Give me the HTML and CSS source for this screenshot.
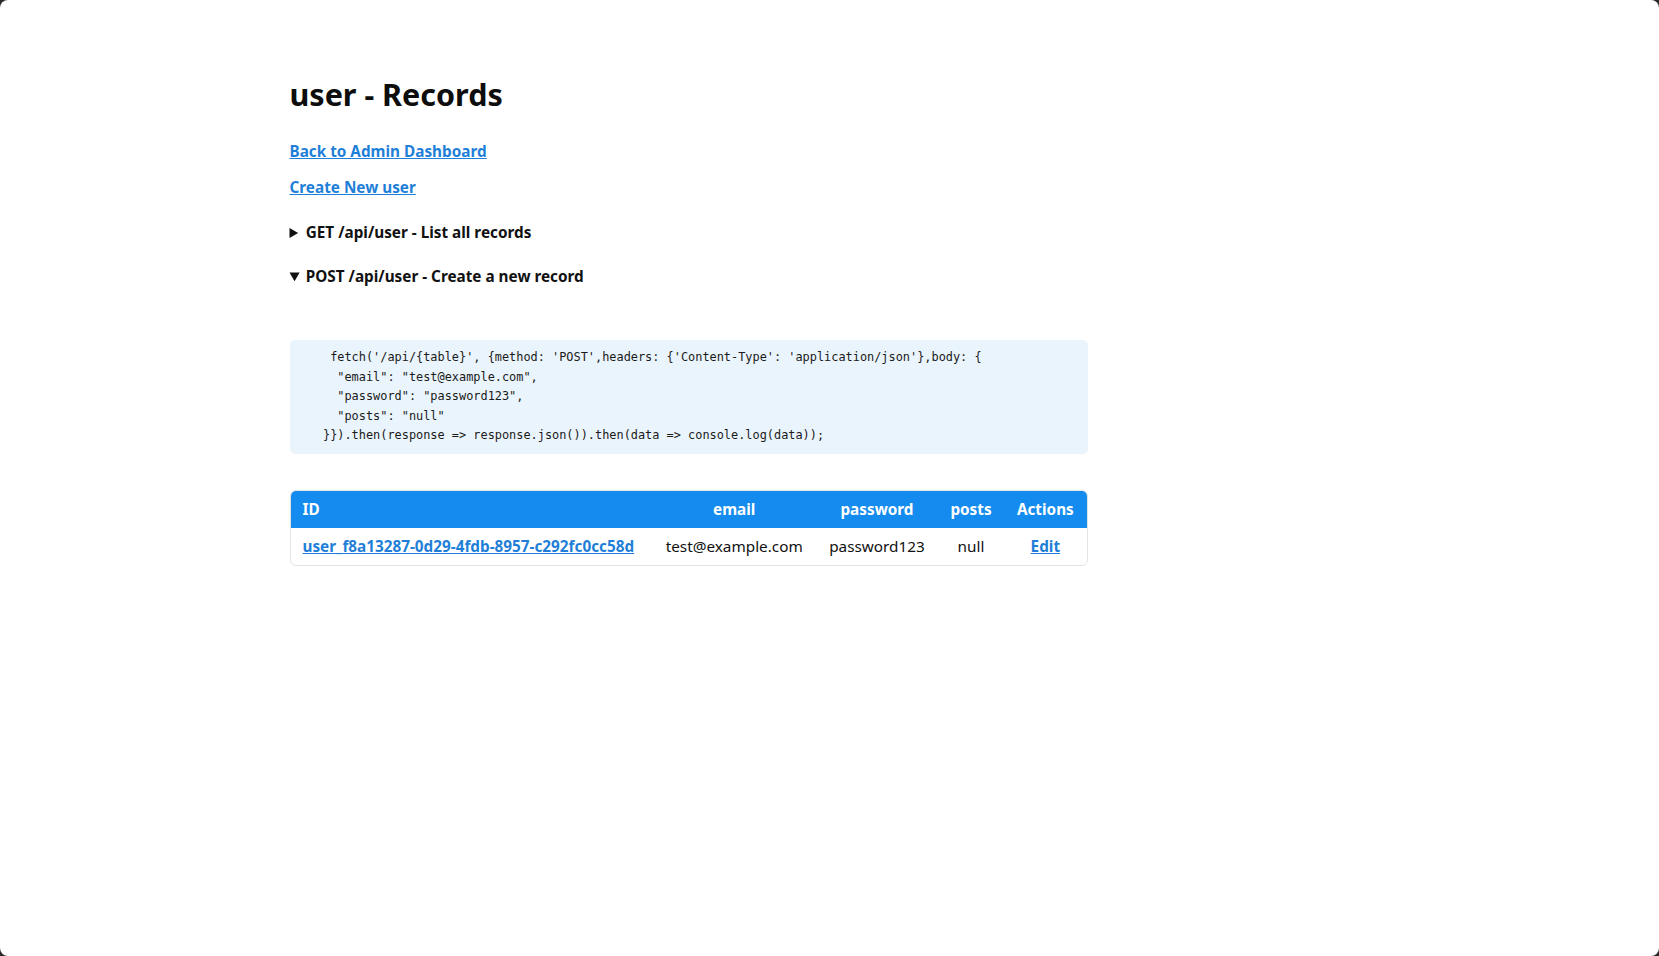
FILE: index.html
```html
<!DOCTYPE html>
<html lang="en">
<head>
<meta charset="utf-8">
<title>user - Records</title>
<link rel="stylesheet" href="styles.css">
</head>
<body>
<div class="page">
  <h1 class="title">user - Records</h1>
  <p class="nav"><a href="#">Back to Admin Dashboard</a></p>
  <p class="nav nav-second"><a href="#">Create New user</a></p>
  <details class="api api-get">
    <summary>GET /api/user - List all records</summary>
    <pre class="code">fetch('/api/user').then(response =&gt; response.json()).then(data =&gt; console.log(data));</pre>
  </details>
  <details class="api api-post" open>
    <summary>POST /api/user - Create a new record</summary>
    <pre class="code">    fetch('/api/{table}', {method: 'POST',headers: {'Content-Type': 'application/json'},body: {
     "email": "test@example.com",
     "password": "password123",
     "posts": "null"
   }}).then(response =&gt; response.json()).then(data =&gt; console.log(data));</pre>
  </details>
  <table class="records">
    <thead>
      <tr>
        <th class="col-id">ID</th>
        <th>email</th>
        <th>password</th>
        <th>posts</th>
        <th>Actions</th>
      </tr>
    </thead>
    <tbody>
      <tr>
        <td class="col-id"><a href="#">user_f8a13287-0d29-4fdb-8957-c292fc0cc58d</a></td>
        <td>test@example.com</td>
        <td>password123</td>
        <td>null</td>
        <td><a href="#">Edit</a></td>
      </tr>
    </tbody>
  </table>
</div>
</body>
</html>
```

FILE: styles.css
```css
html {
  background: #2a2a2a;
}

body {
  margin: 0;
  min-height: 100vh;
  background: #ffffff;
  border-radius: 8px;
  font-family: "Noto Sans", "Open Sans", sans-serif;
  color: #111111;
}

.page {
  width: 1080px;
  margin: 0 auto;
  padding-top: 74px;
}

.title {
  margin: 0;
  font-size: 30.5px;
  line-height: 40px;
  font-weight: 700;
  color: #0d0d0d;
}

.nav {
  margin: 27px 0 0;
  font-size: 15.3px;
  line-height: 20px;
  font-weight: 700;
}

.nav-second {
  margin-top: 16px;
}

a {
  color: #1f7fd8;
  text-decoration: underline;
  font-weight: 700;
}

.api {
  margin-top: 25px;
}

.api-post {
  margin-top: 24px;
}

.api summary {
  font-size: 15.3px;
  line-height: 20px;
  font-weight: 700;
  cursor: pointer;
}

.code {
  box-sizing: border-box;
  width: 798px;
  margin: 54px 0 0;
  padding: 8px 12px;
  background: #eaf4fc;
  border-radius: 5px;
  font-family: "DejaVu Sans Mono", "Liberation Mono", monospace;
  font-size: 11.9px;
  line-height: 19.5px;
  color: #1a1a1a;
  white-space: pre;
}

.records {
  width: 798px;
  margin-top: 36px;
  border-collapse: separate;
  border-spacing: 0;
  border: 1px solid #e3e3e3;
  border-radius: 6px;
  overflow: hidden;
  font-size: 15.3px;
}

.records th,
.records td {
  padding: 8.5px 12px;
  line-height: 20px;
  text-align: center;
  white-space: nowrap;
}

.records th {
  background: #148bee;
  color: #ffffff;
  font-weight: 700;
}

.records td {
  color: #111111;
}

.records .col-id {
  text-align: left;
}
```
